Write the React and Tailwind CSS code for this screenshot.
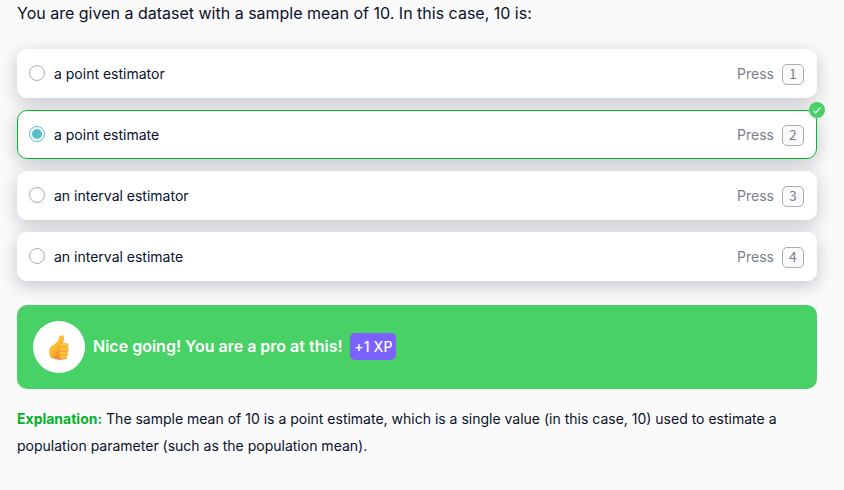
const options = [
  { key: 1, label: 'a point estimator' },
  { key: 2, label: 'a point estimate', correct: true },
  { key: 3, label: 'an interval estimator' },
  { key: 4, label: 'an interval estimate' },
];

function Radio({ checked }) {
  return (
    <span
      className={`flex size-4 shrink-0 items-center justify-center rounded-full border bg-white ${
        checked ? 'border-[#56c1c9]' : 'border-[#abacb5]'
      }`}
    >
      {checked && <span className="size-2.5 rounded-full bg-[#56c1c9]" />}
    </span>
  );
}

function Option({ option }) {
  return (
    <li className="rounded-[10px] shadow-[0_5px_18px_rgba(12,12,50,0.22)]">
      <div
        className={`relative z-10 flex h-[49px] items-center rounded-[10px] border bg-white pr-3 pl-[11px] ${
          option.correct ? 'border-[#03b32a]' : 'border-white'
        }`}
      >
        <span className="mb-0.5 flex">
          <Radio checked={option.correct} />
        </span>
        <span className="ml-[9px] text-[14px]">{option.label}</span>
        <span className="ml-auto text-[14px] text-[#7b7f8e]">Press</span>
        <kbd className="mt-0.5 ml-2 flex h-[21px] w-[22px] items-center justify-center rounded-[5px] border border-[#abacb5] bg-[#fafafa] pb-0.5 font-['Noto_Sans_CJK_JP',sans-serif] text-[14px] leading-[17px] text-[#7b7f8e]">
          {option.key}
        </kbd>
        {option.correct && (
          <span className="absolute -top-[9px] -right-[9px] flex size-4 items-center justify-center rounded-full bg-[#48d265]">
            <svg viewBox="0 0 16 16" className="size-4" fill="none" stroke="white" strokeWidth="1.2">
              <path d="M4.5 8.6 L6.8 10.9 L11.4 5.6" />
            </svg>
          </span>
        )}
      </div>
    </li>
  );
}

function ThumbsUp() {
  return (
    <svg viewBox="0 0 60 75" className="h-[25px] w-5">
      <defs>
        <linearGradient id="hand" x1="0" y1="0" x2="0.7" y2="1">
          <stop offset="0" stopColor="#ffc93c" />
          <stop offset="0.55" stopColor="#fdb92d" />
          <stop offset="1" stopColor="#e8782f" />
        </linearGradient>
        <linearGradient id="finger" x1="0" y1="0" x2="0" y2="1">
          <stop offset="0" stopColor="#ffd04a" />
          <stop offset="1" stopColor="#f9ab30" />
        </linearGradient>
      </defs>
      <path
        d="M39 1 C46 1 46 10 44 17 L40 29 L45 44 L44 73 C34 76 19 73 10 70 C2 66 0 57 1 48 C1 35 10 32 18 26 C26 20 29 15 30 8 C31 3 35 1 39 1Z"
        fill="url(#hand)"
      />
      <g fill="url(#finger)" stroke="#ee9a2a" strokeWidth="1.2">
        <rect x="31" y="25" width="27" height="14" rx="7" />
        <rect x="30" y="38" width="29" height="13" rx="6.5" />
        <rect x="30" y="50" width="27" height="12" rx="6" />
        <rect x="31" y="61" width="22" height="11" rx="5.5" />
      </g>
    </svg>
  );
}

export default function App() {
  return (
    <main className="h-[490px] w-[844px] overflow-hidden bg-[#fafafa] pr-[27px] pl-[17px] font-[Inter,sans-serif] text-[#08112b]">
      <h1 className="pt-px text-[16px] leading-6">
        You are given a dataset with a sample mean of 10. In this case, 10 is:
      </h1>
      <ul className="mt-6 flex flex-col gap-3">
        {options.map((option) => (
          <Option key={option.key} option={option} />
        ))}
      </ul>
      <section className="mt-6 flex h-[84px] items-center rounded-[10px] bg-[#48d265] px-4">
        <span className="flex size-[52px] items-center justify-center rounded-full bg-white">
          <ThumbsUp />
        </span>
        <strong className="mb-0.5 ml-2 w-[249px] text-[16px] font-semibold whitespace-nowrap text-white">
          Nice going! You are a pro at this!
        </strong>
        <span className="mb-px ml-2 flex h-[27px] w-[46px] items-center justify-center rounded-[5px] bg-[#7b61ff] pl-px text-[14px] font-medium tracking-[0.01em] text-white">
          +1 XP
        </span>
      </section>
      <p className="mt-4 text-[14px] leading-[27px]">
        <strong className="font-bold text-[#03b32a]">Explanation:</strong> The sample mean of 10 is a
        point estimate, which is a single value (in this case, 10) used to estimate a population parameter
        (such as the population mean).
      </p>
    </main>
  );
}
